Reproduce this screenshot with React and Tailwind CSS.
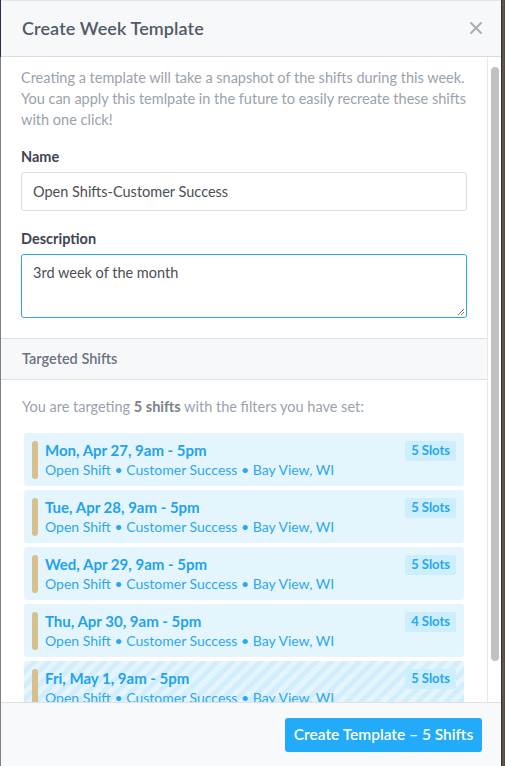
import React from "react";

const shifts = [
  { day: "Mon, Apr 27, 9am - 5pm", slots: "5 Slots" },
  { day: "Tue, Apr 28, 9am - 5pm", slots: "5 Slots" },
  { day: "Wed, Apr 29, 9am - 5pm", slots: "5 Slots" },
  { day: "Thu, Apr 30, 9am - 5pm", slots: "4 Slots" },
  { day: "Fri, May 1, 9am - 5pm", slots: "5 Slots", striped: true },
];

function ShiftCard({ s }) {
  return (
    <div
      className={
        "flex rounded-[3px] pl-[8px] pr-[8px] pt-[8px] pb-[6px] " +
        (s.striped
          ? "bg-[repeating-linear-gradient(135deg,#e5f5fd_0px,#e5f5fd_5px,#d2eefc_5px,#d2eefc_10px)]"
          : "bg-[#e5f5fd]")
      }
    >
      <div className="w-[6px] h-[38px] rounded-full bg-[#d6c08d] shrink-0" />
      <div className="flex-1 pl-[7px] -mt-[1px]">
        <div className="text-[15px] font-bold leading-[20px] text-[#1fa3ec]">{s.day}</div>
        <div className="text-[14px] leading-[20px] text-[#2aa8ee]">
          Open Shift • Customer Success • Bay View, WI
        </div>
      </div>
      <div className="self-start h-[20px] px-[6px] flex items-center rounded-[2px] bg-[#cdeefd] text-[13px] font-bold text-[#27a7ee]">
        {s.slots}
      </div>
    </div>
  );
}

export default function App() {
  return (
    <div
      className="w-[505px] h-[766px] flex bg-[#4a4239] overflow-hidden"
      style={{ fontFamily: "Lato, 'Open Sans', sans-serif" }}
    >
      <div className="w-[1px] flex flex-col">
        <div className="h-[57px] bg-[#26304a]" />
        <div className="flex-1 bg-[#7a818c]" />
      </div>
      <div className="w-[500px] flex flex-col bg-white">
        {/* Header */}
        <div className="h-[57px] shrink-0 flex items-center justify-between pl-[21px] pr-[18px] bg-[#f7f8fa] border-t border-[#e3e6ea] border-b border-b-[#d9dde3]">
          <div className="text-[18px] font-semibold text-[#515b68] tracking-[0.1px]">Create Week Template</div>
          <svg width="14" height="14" viewBox="0 0 14 14" className="mt-[-2px]">
            <path d="M2 2 L12 12 M12 2 L2 12" stroke="#a9b0b8" strokeWidth="2.2" strokeLinecap="round" />
          </svg>
        </div>

        {/* Body */}
        <div className="flex-1 flex min-h-0">
          <div className="flex-1 overflow-hidden">
            <div className="px-[20px] pt-[10px] pb-[20px]">
              <p className="text-[14.5px] leading-[21px] text-[#9aa2ac]">
                Creating a template will take a snapshot of the shifts during this week. You can apply this temlpate in the future to easily recreate these shifts with one click!
              </p>
              <div className="mt-[17px] text-[14.5px] font-bold leading-[20px] text-[#3e4550]">Name</div>
              <div className="mt-[5px] h-[39px] border border-[#d9dee4] rounded-[3px] flex items-center px-[11px] text-[14.5px] text-[#4a4f57]">
                Open Shifts-Customer Success
              </div>
              <div className="mt-[18px] text-[14.5px] font-bold leading-[20px] text-[#3e4550]">Description</div>
              <div className="mt-[5px] h-[64px] border border-[#2aa9f2] rounded-[3px] px-[11px] pt-[7px] text-[14.5px] text-[#4a4f57] relative">
                3rd week of the month
                <svg width="8" height="8" viewBox="0 0 8 8" className="absolute right-[1px] bottom-[1px]">
                  <path d="M7 1 L1 7 M7 4 L4 7" stroke="#777" strokeWidth="1" />
                </svg>
              </div>
            </div>
            <div className="h-[42px] flex items-center px-[21px] bg-[#f7f8fa] border-t border-b border-[#dde1e6] text-[14.5px] font-semibold text-[#6b7380]">
              Targeted Shifts
            </div>
            <div className="pl-[23px] pr-[23px] pt-[17px]">
              <p className="-ml-[2px] text-[14.5px] leading-[20px] text-[#9aa2ac]">
                You are targeting <span className="font-bold text-[#79818c]">5 shifts</span> with the filters you have set:
              </p>
              <div className="mt-[16px] flex flex-col gap-[4px]">
                {shifts.map((s) => (
                  <ShiftCard key={s.day} s={s} />
                ))}
              </div>
            </div>
          </div>
          <div className="w-[14px] shrink-0 border-l border-[#e6e8eb] bg-white pt-[10px] pb-[40px] flex justify-center">
            <div className="w-[8px] h-[594px] rounded-full bg-[#c1c1c1]" />
          </div>
        </div>

        {/* Footer */}
        <div className="h-[64px] shrink-0 border-t border-[#dde1e6] bg-[#f8f9fb] flex items-start justify-end pr-[19px] pt-[15px]">
          <button className="h-[34px] w-[197px] rounded-[3px] bg-[#21abf9] text-white text-[15.5px] font-semibold">
            Create Template – 5 Shifts
          </button>
        </div>
      </div>
      <div className="flex-1 bg-[linear-gradient(90deg,#2b2520,#6a5f52,#4c4339)]" />
    </div>
  );
}
